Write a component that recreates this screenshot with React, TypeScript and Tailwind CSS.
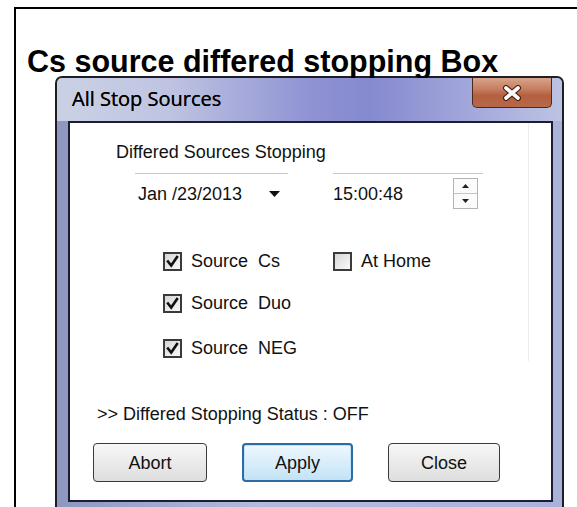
import React from "react";

function CheckBox({ checked }: { checked: boolean }) {
  return (
    <div className="w-[19px] h-[19px] border-2 border-[#3a3a3a] bg-gradient-to-br from-[#d6d6d6] to-[#fafafa] flex items-center justify-center shrink-0">
      {checked && (
        <svg width="13" height="13" viewBox="0 0 13 13">
          <path d="M2 6.5 L5.2 10.5 L11 2" fill="none" stroke="#111" strokeWidth="2.6" strokeLinecap="square" />
        </svg>
      )}
    </div>
  );
}

function Check({ checked, label }: { checked: boolean; label: string }) {
  return (
    <div className="flex items-center h-[22px] gap-[9px]">
      <CheckBox checked={checked} />
      <span className="whitespace-pre leading-[22px]">{label}</span>
    </div>
  );
}

export default function App() {
  return (
    <div className="w-[577px] h-[507px] overflow-hidden bg-white pt-[7px] pl-[14px] font-['Liberation_Sans',Arial,sans-serif] text-[#111]">
      <div className="w-[620px] h-[560px] border-2 border-black">
        <h1 className="pt-[37px] pl-[11px] text-[30.5px] leading-[30px] font-bold text-black whitespace-nowrap">
          Cs source differed stopping Box
        </h1>
        <div className="ml-[39px] w-[509px] h-[460px] border-2 border-[#1e1e26] rounded-t-[7px] bg-[linear-gradient(90deg,#8e97bf_0%,#b3bbdc_40%,#aab2da_100%)] flex flex-col">
          {/* title bar */}
          <div className="h-[43px] flex items-start justify-between rounded-t-[5px] bg-[linear-gradient(90deg,#cbd1e4_0%,#bfc4e2_22%,#8f93d3_50%,#8589cf_62%,#a3a8db_82%,#bcc3e2_100%)] shrink-0">
            <span className="self-center pl-[15px] pb-[2px] font-['Open_Sans',sans-serif] text-[20px] leading-[26px] text-black [text-shadow:0_0_0.4px_#000]">
              All Stop Sources
            </span>
            <div className="mr-[10px] w-[80px] h-[30px] border border-[#4a2a1c] border-t-0 rounded-b-[5px] bg-[linear-gradient(180deg,#d8a48a_0%,#c47d5f_40%,#b4603f_60%,#b5684a_100%)] flex items-center justify-center">
              <svg width="20" height="16" viewBox="0 0 20 16">
                <path d="M4 3 L16 13 M16 3 L4 13" stroke="#4a2014" strokeWidth="6" strokeLinecap="round" />
                <path d="M4 3 L16 13 M16 3 L4 13" stroke="#fff" strokeWidth="3.6" strokeLinecap="round" />
              </svg>
            </div>
          </div>
          {/* body */}
          <div className="flex-1 pl-[11px] pr-[7px] flex">
            <div className="w-[485px] h-[381px] border-2 border-[#1c1c34] bg-white text-[18px] leading-[22px]">
              <div className="w-[459px] border-r border-[#ececec]">
                <div className="pt-[18px] pl-[46px]">Differed Sources Stopping</div>
                <div className="mt-[10px] ml-[65px] flex gap-[45px]">
                  <div className="w-[153px] h-px bg-[#c8c8c8]" />
                  <div className="w-[150px] h-px bg-[#c8c8c8]" />
                </div>
                <div className="mt-[4px] ml-[65px] flex gap-[45px] items-center">
                  <div className="w-[153px] flex items-center">
                    <span className="pl-[3px] whitespace-pre">Jan /23/2013</span>
                    <svg className="ml-auto mr-[8px]" width="11" height="6" viewBox="0 0 11 6">
                      <path d="M0 0 L11 0 L5.5 6 Z" fill="#111" />
                    </svg>
                  </div>
                  <div className="w-[150px] flex items-center">
                    <span>15:00:48</span>
                    <div className="ml-auto mr-[5px] w-[25px] h-[31px] border border-[#b4b4b4] flex flex-col bg-[#fbfbfb]">
                      <div className="flex-1 flex items-center justify-center border-b border-[#c4c4c4]">
                        <svg width="7" height="4" viewBox="0 0 7 4">
                          <path d="M0 4 L7 4 L3.5 0 Z" fill="#222" />
                        </svg>
                      </div>
                      <div className="flex-1 flex items-center justify-center">
                        <svg width="7" height="4" viewBox="0 0 7 4">
                          <path d="M0 0 L7 0 L3.5 4 Z" fill="#222" />
                        </svg>
                      </div>
                    </div>
                  </div>
                </div>
                <div className="mt-[41px] ml-[93px] grid grid-cols-[170px_auto]">
                  <Check checked label="Source  Cs" />
                  <Check checked={false} label="At Home" />
                </div>
                <div className="mt-[20px] ml-[93px]">
                  <Check checked label="Source  Duo" />
                </div>
                <div className="mt-[23px] ml-[93px] pb-[2px]">
                  <Check checked label="Source  NEG" />
                </div>
              </div>
              <div className="mt-[42px] ml-[27px]">&gt;&gt; Differed Stopping Status : OFF</div>
              <div className="mt-[18px] ml-[23px] flex gap-[35px]">
                <button className="w-[114px] h-[39px] border border-[#3a3a3a] rounded-[4px] bg-gradient-to-b from-[#f7f7f7] to-[#dedede] text-[18px]">
                  Abort
                </button>
                <button className="w-[111px] h-[39px] border-2 border-[#2e6aa6] rounded-[4px] bg-gradient-to-b from-[#eef8fe] to-[#c3e3f6] text-[18px] shadow-[inset_0_0_0_1px_#bfe3f8]">
                  Apply
                </button>
                <button className="w-[112px] h-[39px] border border-[#3a3a3a] rounded-[4px] bg-gradient-to-b from-[#f7f7f7] to-[#dedede] text-[18px]">
                  Close
                </button>
              </div>
            </div>
          </div>
        </div>
      </div>
    </div>
  );
}
